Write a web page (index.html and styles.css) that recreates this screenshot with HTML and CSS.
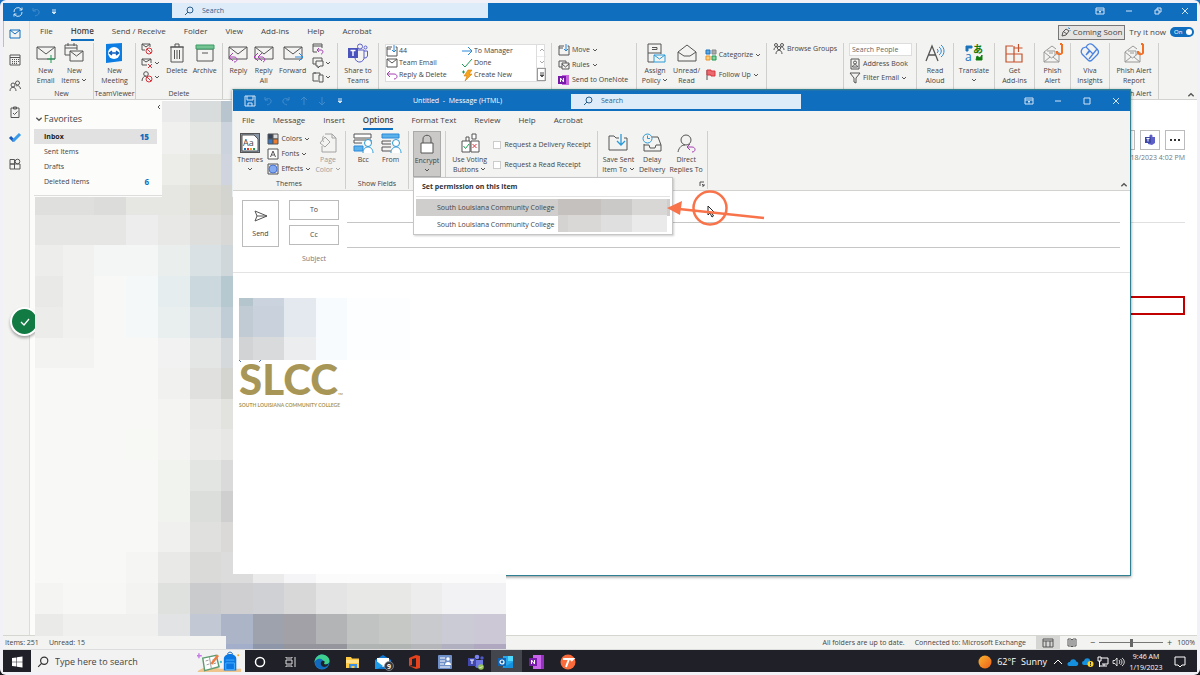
FILE: index.html
```html
<!DOCTYPE html>
<html lang="en">
<head>
<meta charset="utf-8">
<title>Untitled - Message (HTML)</title>
<link rel="stylesheet" href="styles.css">
</head>
<body>
<svg class="sprite" aria-hidden="true">
  <symbol id="env" viewBox="0 0 20 20"><path d="M1 4h18v12H1zM1 4l9 7 9-7"/></symbol>
  <symbol id="chev" viewBox="0 0 6 6"><path d="M1 2l2 2 2-2"/></symbol>
  <symbol id="search" viewBox="0 0 10 10"><circle cx="6" cy="4" r="3"/><path d="M4 6L1 9"/></symbol>
  <symbol id="teams" viewBox="0 0 20 20"><g stroke="#5b5fc7"><circle cx="12" cy="3.500" r="2.500"/><circle cx="17.500" cy="4.500" r="1.500"/><path d="M9 7h7v7a4.500 4.500 0 0 1-9 1M16 8h3.500v5a3 3 0 0 1-3.500 2"/></g><rect x="0" y="5" width="10" height="10" fill="#4b53bc" stroke="none"/><path d="M2.500 7.500h5M5 7.500v5.500" stroke="#fff" stroke-width="1.400"/></symbol>
  <symbol id="ribbonopt" viewBox="0 0 10 10"><path d="M1 2h8v6H1zM1 4h8M5 7.500V5M4 6l1-1 1 1"/></symbol>
  <symbol id="close" viewBox="0 0 10 10"><path d="M2 2l6 6M8 2L2 8"/></symbol>
  <symbol id="min" viewBox="0 0 10 10"><path d="M2 5h6"/></symbol>
  <symbol id="max" viewBox="0 0 10 10"><path d="M2 2h6v6H2z"/></symbol>
  <symbol id="restore" viewBox="0 0 10 10"><path d="M2 4h4v4H2zM4 4V2h4v4H6"/></symbol>
  <symbol id="undo" viewBox="0 0 10 10"><path d="M2 1v3h3M2 4c3-3 7-1 6 2-.5 2-2 2-4 3"/></symbol>
  <symbol id="custom" viewBox="0 0 6 6"><path d="M1 1h4M1 3l2 2 2-2z" fill="currentColor"/></symbol>
  <symbol id="movefolder" viewBox="0 0 12 12"><path d="M6 2H1v9h10V2H9.500M1 4h4"/><path d="M8 0v7M6 5l2 2 2-2" stroke="#2b88d8"/></symbol>
  <symbol id="replyarrow" viewBox="0 0 12 12"><path d="M4 2L1 5l3 3M1 5h7c4 0 4 5 0 5" stroke="#a43fb1"/></symbol>
  <symbol id="phish" viewBox="0 0 20 20"><path d="M1 9l8-6 4 3M1 9v10h15V9M1 9l7.500 6L16 9M1 19l6-5M16 19l-6-5M4 8h8v4M6 10h4" stroke="#999"/><path d="M19 1v9a3 3 0 0 1-5 0V8M17 1h2" stroke="#f36f21" stroke-width="2"/></symbol>
  <symbol id="nosign" viewBox="0 0 12 12"><circle cx="8" cy="8" r="3" stroke="#d9363e"/><path d="M6 6l4 4" stroke="#d9363e"/></symbol>
</svg>

<main class="outlook">
  <header class="titlebar">
    <div class="quick">
      <button aria-label="Sync"><svg class="i10" viewBox="0 0 10 10"><path d="M1 5a4 4 0 0 1 7-3l1 1M9 .500V3H6.500M9 5a4 4 0 0 1-7 3L1 7M1 9.500V7h2.500"/></svg></button>
      <button class="dim" aria-label="Undo"><svg class="i10"><use href="#undo"/></svg></button>
      <button aria-label="Customize"><svg class="i6"><use href="#custom"/></svg></button>
    </div>
    <label class="searchbar"><svg class="i10"><use href="#search"/></svg><input type="text" value="Search" aria-label="Search mail"></label>
    <div class="winctl">
      <button aria-label="Ribbon options"><svg class="i10"><use href="#ribbonopt"/></svg></button>
      <button aria-label="Minimize"><svg class="i10"><use href="#min"/></svg></button>
      <button aria-label="Restore"><svg class="i10"><use href="#restore"/></svg></button>
      <button aria-label="Close"><svg class="i10"><use href="#close"/></svg></button>
    </div>
  </header>

  <div class="workspace">
    <nav class="rail" aria-label="Modules">
      <a href="#" class="on" aria-label="Mail"><svg class="i12" viewBox="0 0 12 12"><path d="M1 2h10v8H1zM1 2l5 4 5-4"/></svg></a>
      <a href="#" aria-label="Calendar"><svg class="i12" viewBox="0 0 12 12"><path d="M1 1h10v10H1zM1 3.500h10"/><path d="M3 5.500h7M3 7.500h7M3 9.300h5" stroke-dasharray="1 1" stroke-width="1.200"/></svg></a>
      <a href="#" aria-label="People"><svg class="i12" viewBox="0 0 12 12"><circle cx="8.500" cy="3" r="2"/><circle cx="4" cy="5" r="2"/><path d="M1 11c0-5 6-5 6 0M7 6c2-1 4 0 4.500 3"/></svg></a>
      <a href="#" aria-label="Tasks"><svg class="i12" viewBox="0 0 12 12"><path d="M2 2h8v9.500H2zM4.500 1h3v2h-3zM4 7l1.500 1.500L8.500 5.500"/></svg></a>
      <a href="#" aria-label="To Do"><svg class="i12" viewBox="0 0 12 12"><path d="M1 5l4 4" stroke="#185abd" stroke-width="3"/><path d="M4 9l7-7" stroke="#3a9be8" stroke-width="3"/></svg></a>
      <a href="#" aria-label="More apps"><svg class="i12" viewBox="0 0 12 12"><path d="M1 1.500h4.500V6H1zM1 6h4.500v5H1zM5.500 6H11v5H5.500z"/><circle cx="8.500" cy="3.500" r="2.300"/></svg></a>
    </nav>

    <div class="main">
      <section class="ribbon">
        <div class="tabrow">
          <nav class="tabs"><a href="#">File</a><a href="#" class="on">Home</a><a href="#">Send / Receive</a><a href="#">Folder</a><a href="#">View</a><a href="#">Add-ins</a><a href="#">Help</a><a href="#">Acrobat</a></nav>
          <div class="preview">
            <button class="coming"><svg class="i10" viewBox="0 0 10 10"><path d="M1 9l1-4 3-3 3 2-3 4zM3 5l3 2"/><path d="M7 1l1 0M9 3v1M9 1l-1 1" stroke="#2b88d8"/></svg>Coming Soon</button>
            <span>Try it now</span><button class="toggle" aria-pressed="true">On</button>
          </div>
        </div>
        <div class="groups main-groups">
          <div class="group"><div class="tools">
            <button class="big"><svg class="i20"><use href="#env"/><path d="M15 12v8M11 16h8" stroke="#1f9a55"/></svg>New<br>Email</button>
            <button class="big"><svg class="i20" viewBox="0 0 20 20"><path d="M6 12H1V2h12v5M1 5h12M4 0v3M10 0v3"/><path d="M6 8h13v10H6zM6 8l6.500 5L19 8"/></svg>New<br>Items <svg class="i6"><use href="#chev"/></svg></button>
          </div><h3>New</h3></div>
          <div class="group"><div class="tools">
            <button class="big"><svg class="i20" viewBox="0 0 20 20"><path d="M2 1l16-1v18L2 20z" fill="#0b7de3" stroke="none"/><circle cx="10" cy="10" r="6" fill="#fff" stroke="none"/><path d="M5.500 10h9M8 8l-2.500 2L8 12M12 8l2.500 2L12 12" stroke="#0b5fc0" stroke-width="1.500"/></svg>New<br>Meeting</button>
          </div><h3>TeamViewer</h3></div>
          <div class="group"><div class="tools">
            <div class="minis">
              <button aria-label="Ignore"><svg class="i12" viewBox="0 0 12 12"><path d="M4 7H1V1h8v3M1 1l4 3 4-3"/><use href="#nosign"/></svg></button>
              <button aria-label="Clean up"><svg class="i12" viewBox="0 0 12 12"><path d="M6 8H1V2h9v4M1 2l4 3 5-3"/><path d="M7 7l4 4M11 7l-4 4" stroke="#d9363e"/></svg><svg class="i6"><use href="#chev"/></svg></button>
              <button aria-label="Junk"><svg class="i12" viewBox="0 0 12 12"><circle cx="5" cy="3" r="2.300"/><path d="M1 10c0-3 2-5 4-5"/><use href="#nosign"/></svg><svg class="i6"><use href="#chev"/></svg></button>
            </div>
            <button class="big"><svg class="i20" viewBox="0 0 20 20"><path d="M4 4h12v15H4zM3 4h14M8 4V1h4v3M7.500 7v9M10 7v9M12.500 7v9"/></svg>Delete</button>
            <button class="big"><svg class="i20" viewBox="0 0 20 20"><path d="M2 6h16v12H2zM7 10h6"/><path d="M1 2h18v4H1z" fill="#74c493" stroke="#3a9b62"/></svg>Archive</button>
          </div><h3>Delete</h3></div>
          <div class="group"><div class="tools">
            <button class="big"><svg class="i20"><use href="#env"/><path d="M5 10l-4 4 4 4M1 14h5c4 0 4 5 0 5" stroke="#a43fb1"/></svg>Reply</button>
            <button class="big"><svg class="i20"><use href="#env"/><path d="M4 10l-4 4 4 4M8 10l-4 4 4 4M4 14h4c3 0 4 4 1 5" stroke="#a43fb1"/></svg>Reply<br>All</button>
            <button class="big"><svg class="i20"><use href="#env"/><path d="M12 14h7M16 10l4 4-4 4" stroke="#2b88d8"/></svg>Forward</button>
            <div class="minis">
              <button aria-label="Meeting"><svg class="i12" viewBox="0 0 12 12"><path d="M5 9H1V1h9v4M1 3h9"/><path d="M7 5L5 7l2 2M5 7h4c3 0 2 4 0 4" stroke="#a43fb1"/></svg></button>
              <button aria-label="IM"><svg class="i12" viewBox="0 0 12 12"><path d="M4 7H1V1h9v3M4 4h7v5H8l-2 2V9H4z"/></svg><svg class="i6"><use href="#chev"/></svg></button>
              <button aria-label="More"><svg class="i12" viewBox="0 0 12 12"><path d="M6 10H1V2h7v2M3 1v2M7 4h4v7H7z"/></svg><svg class="i6"><use href="#chev"/></svg></button>
            </div>
          </div></div>
          <div class="group"><div class="tools"><button class="big"><svg class="i20"><use href="#teams"/></svg>Share to<br>Teams</button></div></div>
          <div class="group"><div class="gallery">
            <button><svg class="i12"><use href="#movefolder"/></svg>44</button><button><svg class="i12" viewBox="0 0 12 12"><path d="M1 6h10M7 2l4 4-4 4" stroke="#2b88d8"/></svg>To Manager</button>
            <button><svg class="i12" viewBox="0 0 12 12"><path d="M1 2h10v8H1zM1 2l5 4 5-4"/></svg>Team Email</button><button><svg class="i12" viewBox="0 0 12 12"><path d="M1 7l3 3 7-8" stroke="#1f9a55"/></svg>Done</button>
            <button><svg class="i12"><use href="#replyarrow"/></svg>Reply &amp; Delete</button><button><svg class="i12" viewBox="0 0 12 12"><path d="M7 1h4L8 5h3L4 12l2-5H3z" fill="#f7a51d" stroke="#d97a00" stroke-width=".6"/><path d="M1 3h3M2.500 1.500v3" stroke="#1f9a55"/></svg>Create New</button>
            <div class="scroller"><button aria-label="Up"><svg class="i6 flip"><use href="#chev"/></svg></button><button aria-label="Down"><svg class="i6"><use href="#chev"/></svg></button><button class="act" aria-label="More steps"><svg class="i6"><use href="#custom"/></svg></button></div>
          </div></div>
          <div class="group"><div class="rows three">
            <button><svg class="i12"><use href="#movefolder"/></svg>Move <svg class="i6"><use href="#chev"/></svg></button>
            <button><svg class="i12" viewBox="0 0 12 12"><path d="M4 8H1V2h7v2M4 4h7v6H4zM4 5l3.500 3L11 5"/></svg>Rules <svg class="i6"><use href="#chev"/></svg></button>
            <button><svg class="i12" viewBox="0 0 12 12"><path d="M4 1h7v10H4z" fill="#c768dd" stroke="none"/><path d="M0 2h8v8H0z" fill="#7719aa" stroke="none"/><path d="M2.500 8V4l3 4V4" stroke="#fff"/></svg>Send to OneNote</button>
          </div></div>
          <div class="group"><div class="tools">
            <button class="big"><svg class="i20" viewBox="0 0 20 20"><path d="M9 19H3V1h13v10M3 10h13M7 4.500h5v2H7"/><path d="M9 12h11v7H9zM9 12l5.500 4 5.500-4" stroke="#2b9ad8"/></svg>Assign<br>Policy <svg class="i6"><use href="#chev"/></svg></button>
            <button class="big"><svg class="i20" viewBox="0 0 20 20"><path d="M1 9l9-7 9 7v9H1zM1 9l6 4h6l6-4"/></svg>Unread/<br>Read</button>
            <div class="rows two">
              <button><svg class="i12" viewBox="0 0 12 12"><path d="M1 1h4v4H1z" fill="#5da7e0" stroke="#1b75bc"/><path d="M7 1h4v4H7z" fill="#aaa" stroke="#888"/><path d="M1 7h4v4H1z" fill="#ffd37a" stroke="#e8912d"/><path d="M7 7h4v4H7z" fill="#8fd0a0" stroke="#1f9a55"/></svg>Categorize <svg class="i6"><use href="#chev"/></svg></button>
              <button><svg class="i12" viewBox="0 0 12 12"><path d="M2 1v10"/><path d="M2 1h4v1h4v5H6V6H2z" fill="#ea6a70" stroke="#d9363e"/></svg>Follow Up <svg class="i6"><use href="#chev"/></svg></button>
            </div>
          </div></div>
          <div class="group"><div class="rows one"><button><svg class="i12" viewBox="0 0 12 12"><circle cx="3" cy="2" r="1.500"/><circle cx="9" cy="2" r="1.500"/><circle cx="6" cy="5" r="1.700"/><path d="M1 7c0-3 3-4 4-2M11 7c0-3-3-4-4-2M3 11c0-5 6-5 6 0"/></svg>Browse Groups</button></div></div>
          <div class="group"><div class="rows find">
            <input type="text" placeholder="Search People" aria-label="Search People">
            <button><svg class="i12" viewBox="0 0 12 12"><path d="M2 1h8v10H2z"/><circle cx="6" cy="4.500" r="1.500"/><path d="M3.500 9c0-3 5-3 5 0z"/></svg>Address Book</button>
            <button><svg class="i12" viewBox="0 0 12 12"><path d="M1 1h10L7 6v5L5 10V6z"/></svg>Filter Email <svg class="i6"><use href="#chev"/></svg></button>
          </div></div>
          <div class="group"><div class="tools"><button class="big"><svg class="i20" viewBox="0 0 20 20"><path d="M1 18L7 3l6 15M3 12h8" stroke-width="1.300"/><path d="M12 6c1.500 1 1.500 3 0 4M14 4c3 2 3 6 0 8M16 2c4 3 4 9 0 12" stroke="#2b88d8"/></svg>Read<br>Aloud</button></div></div>
          <div class="group"><div class="tools"><button class="big"><svg class="i20" viewBox="0 0 20 20"><text x="1" y="18" class="ltr">a</text><text x="9" y="10" class="kana">あ</text><path d="M2 3h6v2H4v3H2z" fill="#1b75bc" stroke="#1b75bc"/><path d="M12 17h6v-5l-2 3-3-2z" fill="#107c10" stroke="#107c10"/></svg>Translate<br><svg class="i6"><use href="#chev"/></svg></button></div></div>
          <div class="group"><div class="tools"><button class="big"><svg class="i20" viewBox="0 0 20 20"><path d="M9 3H2v16h16v-8H2M10 3v16M14.500 1v8M10.500 5h8" stroke="#c5522b" stroke-width="1.200"/></svg>Get<br>Add-ins</button></div></div>
          <div class="group"><div class="tools"><button class="big"><svg class="i20"><use href="#phish"/></svg>Phish<br>Alert</button></div></div>
          <div class="group"><div class="tools"><button class="big"><svg class="i20" viewBox="0 0 20 20"><path d="M10 8L6 4Q9-1 13 2l4 4q3 3 0 6l-5 5q-2 2-4 0L2 11q-2-3 1-6l3-1M10 8l-4 4M10 8l3 3 4-5M6 12l3-4M13 11l-4 5" stroke="#4a84e0" stroke-width="1.300"/></svg>Viva<br>Insights</button></div></div>
          <div class="group"><div class="tools"><button class="big"><svg class="i20"><use href="#phish"/></svg>Phish Alert<br>Report</button></div><h3>Phish Alert</h3></div>
          <button class="collapse" aria-label="Collapse ribbon"><svg class="i8 flip"><use href="#chev"/></svg></button>
        </div>
      </section>

      <div class="content">
        <aside class="folders">
          <button class="hide" aria-label="Collapse folder pane"><svg class="i6" viewBox="0 0 6 6"><path d="M5 1L3 3l2 2"/></svg></button>
          <h2><svg class="i8"><use href="#chev"/></svg>Favorites</h2>
          <a href="#" class="on">Inbox<b>15</b></a>
          <a href="#">Sent Items</a>
          <a href="#">Drafts</a>
          <a href="#">Deleted Items<b>6</b></a>
          <hr>
        </aside>
        <article class="reading">
          <div class="actions"><button aria-label="Forward"></button><button aria-label="Share to Teams"><svg class="i12" viewBox="0 0 12 12"><path d="M4 3h7v6l-3 2-4-1z" fill="#5b5fc7" stroke="none"/><circle cx="7" cy="2" r="1.600" fill="#5b5fc7" stroke="none"/><path d="M1 3h6v6H1z" fill="#4048a8" stroke="none"/><path d="M2.500 4.500h3M4 4.500v3" stroke="#fff"/></svg></button><button aria-label="More actions"><svg class="i12" viewBox="0 0 12 12"><path d="M1 6h2M5 6h2M9 6h2" stroke="#333" stroke-width="2"/></svg></button></div>
          <time>1/18/2023 4:02 PM</time>
          <hr>
          <div class="callout"></div>
        </article>
      </div>
    </div>
  </div>

  <footer class="status">
    <span>Items: 251</span><span>Unread: 15</span>
    <span class="sync">All folders are up to date.</span><span>Connected to: Microsoft Exchange</span>
    <button class="view on" aria-label="Normal view"><svg class="i10" viewBox="0 0 10 10"><path d="M0 1h10v8H0zM0 3h10M3 3v6M7 3v6"/></svg></button>
    <button class="view" aria-label="Reading view"><svg class="i10" viewBox="0 0 10 10"><path d="M1 1h3l1 1 1-1h3v7H6L5 9 4 8H1zM5 2v7M3 2v5M7 2v5"/></svg></button>
    <label class="zoom">−<input type="range" min="0" max="100" value="50" aria-label="Zoom">+</label>
    <span class="pct">100%</span>
  </footer>
</main>

<footer class="taskbar">
  <button class="start" aria-label="Start"><svg class="i12" viewBox="0 0 12 12"><path d="M1 2l4.500-.6v4.300H1zM6 1.300L11.500.500v5.200H6zM1 6.300h4.500v4.300L1 10zM6 6.300h5.500v5.200L6 10.700z" fill="#fff" stroke="none"/></svg></button>
  <label class="tasksearch"><svg class="i12" viewBox="0 0 10 10"><circle cx="6" cy="4" r="3"/><path d="M4 6L1 9"/></svg><input type="text" value="Type here to search" aria-label="Type here to search">
    <svg class="doodle" viewBox="0 0 48 22"><path d="M0 22c3-5 12-7 24-4h22v4z" fill="#f0c58d"/><path d="M6 7l14-3 3 12-15 4z" fill="#fff" stroke="#5d9b72" stroke-width="1.500"/><path d="M13 6l2 12M9 10l3-1M16 9l3-1M10 14l3-1M17 13l3-1" stroke="#999"/><path d="M15 13l7-9" stroke="#ee7d42" stroke-width="2.500"/><path d="M28 8c0-7 13-7 13 0v12H28z" fill="#0b77e3"/><path d="M32 3c0-3 5-3 5 0" stroke="#075cb5"/><path d="M30 12h9v7h-9zM30 9h9" stroke="#49b2ff"/><path d="M2 2v5M0 4.500h5" stroke="#c77be8" stroke-width="1.500"/><circle cx="43" cy="4" r="1" fill="#f0a52b"/><circle cx="25" cy="11" r="1.200" fill="#37c4dc"/></svg></label>
  <div class="apps">
    <button aria-label="Cortana"><svg class="i12" viewBox="0 0 12 12"><circle cx="6" cy="6" r="4.500" stroke="#fff" stroke-width="1.500"/></svg></button>
    <button aria-label="Task view"><svg class="i12" viewBox="0 0 12 12"><path d="M1 1v1h6V1M1 4h6v4H1zM1 11v-1h6v1M10 1v3M10 6v5M9 5h2" stroke="#ddd"/></svg></button>
    <button aria-label="Edge"><svg class="i16" viewBox="0 0 16 16"><circle cx="8" cy="8" r="7.500" fill="#1b7fd0"/><path d="M.500 8C1 3 5 .500 8 .500c5 0 8 4 7.500 7-.5 3-5 4-6 2 2-4-5-6-9-1.500z" fill="#3fcf8e"/><path d="M1 7c4-4 8-2 8 0-4 0-4 6 4 6-3 3-12 3-12-6z" fill="#1169bd"/><path d="M8 7c3-1 3 1 2 3 2 1 4 0 5-1-1 3-3 4-5 4-4-1-4-5-2-6z" fill="#202128"/></svg></button>
    <button aria-label="File Explorer"><svg class="i16" viewBox="0 0 16 16"><path d="M1 3h5l1 1.500h7V14H1z" fill="#ffca45"/><path d="M1 6h13v3H1z" fill="#ffe08a"/><path d="M4 14v-4h8v4H9.500v-2h-3v2z" fill="#3b8ee0"/></svg></button>
    <button aria-label="Mail"><svg class="i20" viewBox="0 0 20 20"><path d="M2 8l8-5 8 5v9H2z" fill="#1279d3"/><path d="M4 6h12v5l-6 4-6-4z" fill="#fff"/><path d="M2 8l8 6-6 3H2z" fill="#1c9be8"/><circle cx="16" cy="14" r="4.500" fill="#333840" stroke="#999" stroke-width=".7"/><text x="14" y="17" class="badge9">9</text></svg></button>
    <button aria-label="Office"><svg class="i16" viewBox="0 0 16 16"><path d="M3 4l7-3 4 1v12l-4 1-7-3 7 1V4L6 5v6l-3 1z" fill="#e6421b"/></svg></button>
    <button aria-label="Directory"><svg class="i16" viewBox="0 0 16 16"><rect x="1" y="1" width="14" height="14" rx="1" fill="#6f8fc8"/><path d="M3 4h5M3 7h5M3 10h4M3 13h10" stroke="#fff"/><circle cx="11" cy="5" r="1.700" fill="#fff"/><path d="M8 11c0-4 6-4 6 0z" fill="#fff"/></svg></button>
    <button aria-label="Teams"><svg class="i16" viewBox="0 0 16 16"><circle cx="9" cy="3" r="2.300" fill="#7b83eb"/><circle cx="14" cy="4" r="1.700" fill="#5059c9"/><path d="M6 6h9v6c-2 3-7 3-8 0z" fill="#6f77e0"/><path d="M0 4h8v8H0z" fill="#4048b0"/><path d="M2 6h4M4 6v4" stroke="#fff"/><circle cx="13" cy="13" r="2.800" fill="#92c353"/><path d="M11.500 13l1 1 2-2" stroke="#fff" stroke-width=".7"/></svg></button>
    <button class="on" aria-label="Outlook"><svg class="i16" viewBox="0 0 16 16"><path d="M5 2h10v12H5z" fill="#28a8ea"/><path d="M10 2h5v5h-5z" fill="#50d9ff"/><path d="M4 14l11-6v6z" fill="#1490df"/><path d="M0 4h8v8H0z" fill="#0f64b5"/><circle cx="4" cy="8" r="2" stroke="#fff" stroke-width="1.200"/></svg></button>
    <button aria-label="OneNote"><svg class="i16" viewBox="0 0 16 16"><path d="M4 1h11v14H4z" fill="#ca64ea"/><path d="M12 1h3v14h-3z" fill="#9332bf"/><path d="M0 4h8v8H0z" fill="#7719aa"/><path d="M2.500 10V6l3 4V6" stroke="#fff"/></svg></button>
    <button aria-label="Recorder"><svg class="i16" viewBox="0 0 16 16"><circle cx="8" cy="8" r="7.500" fill="#fa6b3c"/><path d="M3 5h10l-2 2M9 5l-3 8" stroke="#fff" stroke-width="2"/></svg></button>
  </div>
  <div class="tray">
    <button class="weather"><svg class="i14" viewBox="0 0 14 14"><defs><linearGradient id="sun" x2="1" y2="1"><stop stop-color="#f9b52e"/><stop offset="1" stop-color="#ee5f1b"/></linearGradient></defs><circle cx="7" cy="7" r="6.500" fill="url(#sun)"/></svg><span>62°F</span><span>Sunny</span></button>
    <div class="trayicons">
      <svg class="i12 flip" viewBox="0 0 12 12"><path d="M2 4l4 4 4-4" stroke="#fff"/></svg>
      <svg class="i12" viewBox="0 0 12 12"><path d="M2 10a2 2 0 0 1 1-4c1-4 6-3 6-.5 3 0 3 4.500 0 4.500z" fill="#1490df"/></svg>
      <svg class="i12" viewBox="0 0 12 12"><path d="M2 9a2 2 0 0 1 0-4c1-4 6-3 6-.5v4.500z" fill="#1490df"/><circle cx="8.500" cy="8" r="3" fill="#ffd21f"/><path d="M8.500 6v2.500M8.500 9v1" stroke="#333"/></svg>
      <svg class="i12" viewBox="0 0 12 12"><path d="M4 2h7v6H5M3 10h7M7 8v2M1 1h3v4H1zM2.500 5v6" stroke="#fff"/></svg>
      <svg class="i12" viewBox="0 0 12 12"><path d="M1 4.500h2L5 2v8L3 7.500H1zM7 4c1 1 1 3 0 4M8.500 3c2 2 2 4 0 6M10 2c3 2 3 6 0 8" stroke="#fff" stroke-width=".8"/></svg>
    </div>
    <time class="clock">9:46 AM<br>1/19/2023</time>
    <button class="note" aria-label="Notifications"><svg class="i12" viewBox="0 0 12 12"><path d="M1 1h10v8H8l-2 2-2-2H1z" stroke="#fff"/></svg></button>
  </div>
</footer>

<section class="message" aria-label="Untitled message">
  <header class="msgtitle">
    <div class="quick">
      <button aria-label="Save"><svg class="i12" viewBox="0 0 12 12"><path d="M1 1h10v10H1zM3 1v4h6V1M4 11V8h4v3"/></svg></button>
      <button class="dim" aria-label="Undo"><svg class="i10"><use href="#undo"/></svg></button>
      <button class="dim" aria-label="Redo"><svg class="i10 mirror"><use href="#undo"/></svg></button>
      <button class="dim" aria-label="Previous"><svg class="i10" viewBox="0 0 10 10"><path d="M5 9V1M2 4l3-3 3 3"/></svg></button>
      <button class="dim" aria-label="Next"><svg class="i10" viewBox="0 0 10 10"><path d="M5 1v8M2 6l3 3 3-3"/></svg></button>
      <button aria-label="Customize"><svg class="i6"><use href="#custom"/></svg></button>
    </div>
    <h1>Untitled &nbsp;- &nbsp;Message (HTML)</h1>
    <label class="searchbar"><svg class="i10"><use href="#search"/></svg><input type="text" value="Search" aria-label="Search"></label>
    <div class="winctl">
      <button aria-label="Ribbon options"><svg class="i10"><use href="#ribbonopt"/></svg></button>
      <button aria-label="Minimize"><svg class="i10"><use href="#min"/></svg></button>
      <button aria-label="Maximize"><svg class="i10"><use href="#max"/></svg></button>
      <button aria-label="Close"><svg class="i10"><use href="#close"/></svg></button>
    </div>
  </header>
  <div class="ribbon">
    <nav class="tabs"><a href="#">File</a><a href="#">Message</a><a href="#">Insert</a><a href="#" class="on">Options</a><a href="#">Format Text</a><a href="#">Review</a><a href="#">Help</a><a href="#">Acrobat</a></nav>
    <div class="groups msg-groups">
      <div class="group"><div class="tools">
        <button class="big"><svg class="i20" viewBox="0 0 20 20"><rect x=".500" y=".500" width="19" height="19" fill="#8797a8"/><path d="M2 2h12l4 4v12H2z" fill="#fff" stroke="#555"/><text x="3" y="13" class="aa">Aa</text><path d="M4 16h2" stroke="#1b75bc" stroke-width="2"/><path d="M7 16h2" stroke="#d9363e" stroke-width="2"/><path d="M10 16h2" stroke="#f0a52b" stroke-width="2"/><path d="M13 16h2" stroke="#1f9a55" stroke-width="2"/></svg>Themes<br><svg class="i6"><use href="#chev"/></svg></button>
        <div class="rows three">
          <button><svg class="i12" viewBox="0 0 12 12"><path d="M1 1h5v5H1z" fill="#33425e"/><path d="M6 1h5v5H6z" fill="#ddd"/><path d="M1 6h5v5H1z" fill="#3777c8"/><path d="M6 6h5v5H6z" fill="#ed7d31"/></svg>Colors <svg class="i6"><use href="#chev"/></svg></button>
          <button><svg class="i12" viewBox="0 0 12 12"><path d="M1 1h10v10H1z" fill="#fff"/><path d="M3.500 9L6 3l2.500 6M4.500 7h3"/></svg>Fonts <svg class="i6"><use href="#chev"/></svg></button>
          <button><svg class="i12" viewBox="0 0 12 12"><path d="M1 1h10v10H1z" fill="#e6e6e6"/><circle cx="6" cy="6" r="4" fill="#85a9ee" stroke="#4b74d1"/></svg>Effects <svg class="i6"><use href="#chev"/></svg></button>
        </div>
        <button class="big off" disabled><svg class="i20" viewBox="0 0 20 20"><path d="M7 1h7l4 4v14H4v-6M14 1v4h4M2 10l5-6 5 5-5 5zM6 3c-2 0-2 5 0 6"/></svg>Page<br>Color <svg class="i6"><use href="#chev"/></svg></button>
      </div><h3>Themes</h3></div>
      <div class="group"><div class="tools">
        <button class="big"><svg class="i20" viewBox="0 0 20 20"><path d="M1 1h17v4H1zM1 7h17v3M1 7v3h8" fill="#fff"/><path d="M1 13h9v5H1z" fill="#5bb2ea" stroke="#2b88d8"/><circle cx="15" cy="10" r="3.500" fill="#fff" stroke="#2b9ad8"/><path d="M10 20c0-8 10-8 10 0" stroke="#2b9ad8" fill="#fff"/></svg>Bcc</button>
        <button class="big"><svg class="i20" viewBox="0 0 20 20"><path d="M1 1h17v4H1z" fill="#5bb2ea" stroke="#2b88d8"/><path d="M1 8h9M1 8v3h9M1 14h9M1 14v4h9" /><circle cx="15" cy="10" r="3.500" fill="#fff" stroke="#2b9ad8"/><path d="M10 20c0-8 10-8 10 0" stroke="#2b9ad8" fill="#fff"/></svg>From</button>
      </div><h3>Show Fields</h3></div>
      <div class="group enc"><button class="big encrypt"><svg class="i20" viewBox="0 0 20 20"><path d="M4 9h12v10H4z" fill="#fff"/><path d="M6 9V5c0-5 8-5 8 0v4"/></svg>Encrypt<br><svg class="i6"><use href="#chev"/></svg></button></div>
      <div class="group"><div class="tools">
        <button class="big"><svg class="i20" viewBox="0 0 20 20"><path d="M2 8h8v11H2zM11 8h8v11h-8zM6 8V4h3v4M12 6V1h4v5z" fill="#fff"/><path d="M3.500 13l2 2.500L9 11" stroke="#1f9a55"/><path d="M12.500 11l4 4M16.500 11l-4 4" stroke="#d9363e"/></svg>Use Voting<br>Buttons <svg class="i6"><use href="#chev"/></svg></button>
        <div class="rows checks">
          <label><input type="checkbox">Request a Delivery Receipt</label>
          <label><input type="checkbox">Request a Read Receipt</label>
        </div>
      </div></div>
      <div class="group"><div class="tools">
        <button class="big"><svg class="i20" viewBox="0 0 20 20"><path d="M11 5H8L6 3H1v14h18V5h-3"/><path d="M13 1v11M9 8l4 4 4-4" stroke="#2b9ad8" stroke-width="1.300"/></svg>Save Sent<br>Item To <svg class="i6"><use href="#chev"/></svg></button>
        <button class="big"><svg class="i20" viewBox="0 0 20 20"><path d="M10 4h6l3 8v6H2v-7M2 12h5l1 3h5l1-3h5"/><circle cx="5.500" cy="5.500" r="4.500" stroke="#2b9ad8"/><path d="M5.500 2.500v3H8" stroke="#2b9ad8"/></svg>Delay<br>Delivery</button>
        <button class="big"><svg class="i20" viewBox="0 0 20 20"><circle cx="10" cy="7" r="5"/><path d="M2 19c1-5 4-7 7-7"/><path d="M14 11l-3 3 3 3M11 14h5c4 0 4 5 0 5" stroke="#a43fb1"/></svg>Direct<br>Replies To</button>
      </div><button class="launcher" aria-label="More options"><svg class="i6" viewBox="0 0 6 6"><path d="M1 5V1h4M3 3l2 2M5 3v2H3"/></svg></button></div>
      <button class="collapse" aria-label="Collapse ribbon"><svg class="i8 flip"><use href="#chev"/></svg></button>
    </div>
  </div>
  <form class="compose">
    <button type="button" class="send"><svg class="i14" viewBox="0 0 14 14"><path d="M1 2l12 5-12 5 2-5zM3 7h10"/></svg>Send</button>
    <button type="button">To</button><input type="text" aria-label="To">
    <button type="button">Cc</button><input type="text" aria-label="Cc">
    <label for="subject">Subject</label><input type="text" id="subject">
  </form>
  <div class="letter">
    <svg class="redacted" viewBox="0 0 171 62"><path fill="#b4c5cd" d="M0 0h14v8H0z"/><path fill="#cad3de" d="M14 0h31v8H14z"/><path fill="#c0cbd4" d="M0 8h14v31H0z"/><path fill="#c9d1dd" d="M14 8h31v31H14z"/><path fill="#d1d3d5" d="M0 39h14v23H0z"/><path fill="#d8dadb" d="M14 39h31v23H14z"/><path fill="#e4e9ef" d="M45 0h32v39H45z"/><path fill="#ebedef" d="M45 39h32v23H45z"/><path fill="#f8fbfd" d="M77 0h31v62H77z"/><path fill="#fcfeff" d="M108 0h63v62h-63z"/><path d="M0 62l2 2M22 62l-2 2" stroke="#4a6fc0"/></svg>
    <div class="logo"><b>SLCC</b><i>™</i><small>SOUTH LOUISIANA COMMUNITY COLLEGE</small></div>
  </div>
  <div class="menu" role="menu">
    <strong>Set permission on this item</strong>
    <button role="menuitem" class="on">South Louisiana Community College</button>
    <button role="menuitem">South Louisiana Community College</button>
    <svg class="mask" viewBox="0 0 109 33"><path fill="#c5c1bf" d="M0 0h43v16H0z"/><path fill="#cbc9c7" d="M43 0h31v16H43z"/><path fill="#d8d7d6" d="M74 0h35v16H74z"/><path fill="#d5d3d2" d="M0 16h10v17H0z"/><path fill="#dad8d7" d="M10 16h33v17H10z"/><path fill="#e0dfdf" d="M43 16h31v17H43z"/><path fill="#eaeaea" d="M74 16h35v17H74z"/></svg>
  </div>
</section>

<button class="bubble" aria-label="Completed"><svg class="i12" viewBox="0 0 12 12"><path d="M2 6l3 3 5-6" stroke="#fff" stroke-width="1.300"/></svg></button>

<svg class="mosaic" viewBox="35 101 471 548" aria-hidden="true">
  <path fill="#f8f8f7" d="M35 197h198v386H35z"/>
  <path fill="#e9eae9" d="M162 101h28v21h-28z"/><path fill="#d9dcdd" d="M190 101h31v21h-31z"/><path fill="#b8c5cf" d="M221 101h11v21h-11z"/>
  <path fill="#f0f1ef" d="M162 122h28v32h-28z"/><path fill="#e4e6e4" d="M190 122h31v32h-31z"/><path fill="#ccd3dd" d="M221 122h11v32h-11z"/>
  <path fill="#ecece8" d="M162 154h28v31h-28z"/><path fill="#dfdfda" d="M190 154h31v31h-31z"/><path fill="#cfd4de" d="M221 154h11v31h-11z"/>
  <path fill="#e6e6e2" d="M162 185h28v30h-64v-18h36z"/><path fill="#d9d8d1" d="M190 185h31v30h-31z"/><path fill="#d3d3cf" d="M221 185h11v12h1v18h-12z"/>
  <path fill="#dfdfdd" d="M35 197h59v18H35z"/><path fill="#dcdcdb" d="M94 197h32v18H94z"/>
  <path fill="#e6e6e5" d="M35 215h91v30H35z"/><path fill="#ecedec" d="M126 215h32v30h-32z"/><path fill="#e8e8e6" d="M158 215h32v30h-32z"/><path fill="#dededd" d="M190 215h31v30h-31z"/><path fill="#d8d8d7" d="M221 215h12v30h-12z"/>
  <path fill="#ededec" d="M35 245h28v31H35z"/><path fill="#f1f1f0" d="M63 245h31v93H63z"/><path fill="#f4f6f5" d="M94 245h64v31H94z"/><path fill="#eaeeed" d="M158 245h32v31h-32z"/><path fill="#d9e1e4" d="M190 245h31v31h-31z"/><path fill="#cfd7da" d="M221 245h12v31h-12z"/>
  <path fill="#e9e9e8" d="M35 276h28v31H35z"/><path fill="#f5f8f8" d="M126 276h32v62h-32z"/><path fill="#e6edee" d="M158 276h32v31h-32z"/><path fill="#cbd8de" d="M190 276h31v31h-31z"/><path fill="#b6c8d0" d="M221 276h12v31h-12z"/>
  <path fill="#ececeb" d="M35 307h28v31H35z"/><path fill="#e9eeef" d="M158 307h32v31h-32z"/><path fill="#d7dfe2" d="M190 307h31v31h-31z"/><path fill="#c0ccd6" d="M221 307h12v31h-12z"/>
  <path fill="#f3f3f1" d="M35 338h59v30H35z"/><path fill="#f2f2f2" d="M158 338h32v30h-32z"/><path fill="#e4e5e5" d="M190 338h31v30h-31z"/><path fill="#d5d9dc" d="M221 338h12v30h-12z"/>
  <path fill="#f1f1f0" d="M158 368h32v31h-32z"/><path fill="#e0e0df" d="M190 368h31v31h-31z"/><path fill="#d4d4d0" d="M221 368h12v31h-12z"/>
  <path fill="#f4f4f3" d="M158 399h32v61h-32z"/><path fill="#e9e9e8" d="M190 399h31v30h-31z"/><path fill="#e2e3de" d="M221 399h12v30h-12z"/>
  <path fill="#f7f9f4" d="M126 429h32v31h-32z"/><path fill="#ebebea" d="M190 429h31v31h-31z"/><path fill="#e7e7e5" d="M221 429h12v31h-12z"/>
  <path fill="#f1f3ee" d="M158 460h32v62h-32z"/><path fill="#e2e5e2" d="M190 460h31v31h-31z"/><path fill="#dadadb" d="M221 460h12v31h-12z"/>
  <path fill="#dbdedb" d="M190 491h31v31h-31z"/><path fill="#cfcfcf" d="M221 491h12v31h-12z"/>
  <path fill="#f0f0ef" d="M158 522h32v30h-32z"/><path fill="#e0e0df" d="M190 522h31v30h-31z"/><path fill="#dbd9d7" d="M221 522h12v30h-12z"/>
  <path fill="#f5f5f4" d="M126 552h32v31h-32z"/><path fill="#e9e9e8" d="M158 552h32v31h-32z"/><path fill="#dadad9" d="M190 552h31v31h-31z"/><path fill="#dcdcdc" d="M221 552h12v22h20v9h-32z"/><path fill="#ebebeb" d="M253 574h31v9h-31z"/><path fill="#f5f5f7" d="M284 574h32v9h-32z"/><path fill="#fbfbfb" d="M316 574h190v9H316z"/>
  <path fill="#f4f4f3" d="M35 583h28v31H35z"/><path fill="#f7f7f6" d="M63 583h63v31H63z"/><path fill="#f3f3f2" d="M126 583h32v31h-32z"/><path fill="#dfe1de" d="M158 583h32v31h-32z"/><path fill="#cacbcd" d="M190 583h31v31h-31z"/><path fill="#cfcfd1" d="M221 583h32v31h-32z"/><path fill="#d0d1d4" d="M253 583h31v31h-31z"/><path fill="#d8d8d8" d="M284 583h32v31h-32z"/><path fill="#e4e4e5" d="M316 583h31v31h-31z"/><path fill="#e8e8e7" d="M347 583h64v31h-64z"/><path fill="#ededed" d="M411 583h31v31h-31z"/><path fill="#f2f2f4" d="M442 583h64v31h-64z"/>
  <path fill="#eaeae9" d="M35 614h28v22H35z"/><path fill="#f0f0ee" d="M63 614h95v22H63z"/><path fill="#e1e3e5" d="M158 614h32v22h-32z"/><path fill="#c2c9d5" d="M190 614h31v22h-31z"/><path fill="#acb5c7" d="M221 614h32v30h-27v-8h-5z"/><path fill="#9ea2ad" d="M253 614h31v30h-31z"/><path fill="#a1a1a7" d="M284 614h32v30h-32z"/><path fill="#b3b4b6" d="M316 614h31v30h-31z"/><path fill="#c1c3c2" d="M347 614h32v30h-32z"/><path fill="#c6c8c6" d="M379 614h32v30h-32z"/><path fill="#c9cacd" d="M411 614h31v30h-31z"/><path fill="#cbcbd6" d="M442 614h32v30h-32z"/><path fill="#cdc8d6" d="M474 614h32v30h-32z"/>
  <path fill="#a3afca" d="M226 644h27v5h-27z"/><path fill="#8e97a9" d="M253 644h31v5h-31z"/><path fill="#95959d" d="M284 644h63v5h-63z"/><path fill="#b0b5b4" d="M347 644h64v5h-64z"/><path fill="#b5b6ba" d="M411 644h31v5h-31z"/><path fill="#b1b0c0" d="M442 644h32v5h-32z"/><path fill="#b0a8c1" d="M474 644h32v5h-32z"/>
</svg>

<svg class="pointer" viewBox="0 0 100 40" aria-hidden="true"><circle cx="43" cy="20" r="16.500" stroke="#f9734a" stroke-width="2.500"/><path d="M41 18v9l2-2 2 4 1.500-1-2-3.500h3z" fill="#fff" stroke="#222"/><path d="M12 21l85 9" stroke="#f9734a" stroke-width="2.500"/><path d="M0 20l15-7-2 14z" fill="#f9734a"/></svg>
</body>
</html>
```
FILE: styles.css
```css
* { box-sizing: border-box; }
html { height: 100%; background: linear-gradient(#1a6fc0 50%, #16171b 50%); }
body {
  margin: 0;
  min-height: 100%;
  height: 100vh;
  padding: 3px;
  display: flex;
  flex-direction: column;
  position: relative;
  overflow: hidden;
  background: #f2f1f7;
  border-radius: 6px;
  color: #444;
  font: 7px/10px "Open Sans", "Noto Sans", sans-serif;
}
button, input { font: inherit; color: inherit; margin: 0; padding: 0; border: 0; background: none; border-radius: 0; min-width: 0; }
button { white-space: nowrap; }
a { color: inherit; text-decoration: none; }
h1, h2, h3 { margin: 0; font: inherit; }
svg { fill: none; stroke: #555; flex: none; overflow: visible; }
.sprite { position: absolute; width: 0; height: 0; }
.i6 { width: 6px; height: 6px; }
.i8 { width: 8px; height: 8px; }
.i10 { width: 10px; height: 10px; }
.i12 { width: 12px; height: 12px; }
.i14 { width: 14px; height: 14px; }
.i16 { width: 16px; height: 16px; }
.i20 { width: 20px; height: 20px; }
.flip { transform: rotate(180deg); }
.mirror { transform: scaleX(-1); }
.ltr { font: 12px "Open Sans", sans-serif; fill: #1b75bc; stroke: none; }
.kana { font: bold 10px "Noto Sans CJK JP", sans-serif; fill: #107c10; stroke: none; }
.aa { font: 9px "Open Sans", sans-serif; fill: #444; stroke: none; }
.badge9 { font: bold 7px "Open Sans", sans-serif; fill: #fff; stroke: none; }

/* Main window */
.outlook { flex: 1; display: flex; flex-direction: column; min-height: 0; background: #fff; }
.titlebar, .msgtitle { display: flex; background: #106ebe; color: #fff; }
.titlebar { height: 18px; }
.titlebar svg, .msgtitle svg { stroke: #cfe3f5; color: #cfe3f5; }
.quick { display: flex; align-items: center; }
.quick button { display: grid; place-items: center; width: 18px; }
.dim { opacity: .25; }
.titlebar .quick { flex: 0 1 169px; padding-left: 6px; }
.searchbar { display: flex; align-items: center; gap: 8px; padding-left: 12px; background: #deecf9; color: #2b5f8c; }
.titlebar .searchbar svg, .msgtitle .searchbar svg { stroke: #2b5f8c; }
.titlebar .searchbar { flex: 0 1 316px; height: 15px; }
.winctl { display: flex; margin-left: auto; }
.winctl button { display: grid; place-items: center; width: 29px; }
.titlebar .winctl { height: 15px; }
.titlebar .winctl button:last-child { width: 25px; }

.workspace { flex: 1; display: flex; min-height: 0; }
.rail { flex: 0 0 27px; display: flex; flex-direction: column; background: #f3f3f2; border-right: 1px solid #dcdcdc; }
.rail a { height: 26px; display: grid; place-items: center; padding-right: 4px; border-left: 1px solid transparent; }
.rail .on { border-color: #9cc8ee; }
.rail .on svg { stroke: #106ebe; }
.main { flex: 1; display: flex; flex-direction: column; min-width: 0; }

.ribbon { background: #f3f3f2; border-bottom: 1px solid #d2d2d0; }
.main > .ribbon { height: 79px; }
.tabrow { display: flex; justify-content: space-between; align-items: center; padding-top: 2px; }
.tabs { display: flex; font-size: 8px; line-height: 16px; gap: 18px; padding-left: 10px; }
.tabs a { border-bottom: 2px solid transparent; white-space: nowrap; }
.tabs .on { font-weight: 600; border-color: #106ebe; }
.preview { display: flex; align-items: center; gap: 4px; padding-right: 3px; font-size: 8px; }
.coming { display: flex; align-items: center; gap: 2px; height: 15px; padding: 0 2px; border: 1px solid #777; background: #e6e4e3; }
.toggle { width: 24px; height: 10px; border-radius: 5px; background: #106ebe; color: #fff; font-size: 6px; line-height: 10px; text-align: left; padding-left: 4px; display: flex; justify-content: space-between; align-items: center; }
.toggle::after { content: ""; width: 6px; height: 6px; margin-right: 2px; border-radius: 50%; background: #fff; }

.groups { display: grid; position: relative; }
.group { display: flex; flex-direction: column; justify-content: space-between; border-right: 1px solid #cfcfcd; min-width: 0; }
.group h3 { text-align: center; line-height: 10px; white-space: nowrap; }
.main-groups { height: 56px; margin-top: 2px; grid-template-columns: 64px 42px 87px 115px 41px 173px 85px 130px 77px 73px 37px 41px 40px 36px 39px 49px 1fr; }
.tools { display: flex; justify-content: space-evenly; align-items: flex-start; }
.big { display: block; text-align: center; line-height: 10px; }
.big > .i20 { display: block; margin: 0 auto 2px; }
.main-groups .big > .i20 { margin-bottom: 3px; }
.minis { display: flex; flex-direction: column; gap: 2px; width: 20px; }
.minis button { display: flex; align-items: center; height: 12px; gap: 1px; }
.rows { display: flex; flex-direction: column; }
.rows button { display: flex; align-items: center; gap: 2px; height: 12px; }
.main-groups .three { gap: 3px; padding: 1px 0 0 6px; }
.two { gap: 8px; padding-top: 6px; }
.one { padding-left: 6px; }
.find { gap: 2px; padding: 0 4px 0 5px; }
.find input { background: #fff; border: 1px solid #ddd; height: 13px; padding-left: 2px; width: 100%; }
.find input::placeholder { color: #666; }
.gallery { display: grid; grid-template-columns: 75px 75px 10px; grid-template-rows: repeat(3, 12px); margin: 1px 6px 0; background: #fff; border: 1px solid #ddd; }
.gallery > button { display: flex; align-items: center; gap: 1px; }
.scroller { grid-column: 3; grid-row: 1 / 4; display: grid; border-left: 1px solid #ddd; }
.scroller button { display: grid; place-items: center; border-bottom: 1px solid #ddd; opacity: .5; }
.scroller .act { opacity: 1; border: 1px solid #999; }
.collapse { align-self: end; justify-self: end; display: grid; padding: 0 2px 0 0; }

.content { flex: 1; display: flex; justify-content: space-between; }
.folders { width: 132px; padding: 3px 5px 0 4px; background: #fcfcfb; }
.hide { display: block; height: 7px; margin: 0 -4px 4px auto; }
.hide svg { display: block; }
.folders h2 { display: flex; align-items: center; gap: 1px; font-size: 9px; line-height: 10px; margin-bottom: 5px; padding-left: 1px; }
.folders a { display: flex; justify-content: space-between; line-height: 15px; padding: 0 8px 0 10px; }
.folders .on { background: #e1e1e1; color: #222; font-weight: 700; }
.folders b { color: #106ebe; font-size: 8px; }
.folders hr { margin: 6px -5px 0 0; border: 0; border-top: 1px solid #ddd; }
.reading { width: 140px; padding: 30px 12px 0 0; display: flex; flex-direction: column; }
.actions { display: flex; justify-content: flex-end; gap: 5px; }
.actions button { width: 20px; height: 20px; display: grid; place-items: center; border: 1px solid #bbb; }
.reading time { margin-top: 3px; text-align: right; color: #777; }
.reading hr { width: 100%; margin: 59px 0 0; border: 0; border-top: 1px solid #e0e0e0; }
.callout { margin-top: 73px; height: 19px; border: 2px solid #c00000; }

.status { height: 14px; display: flex; align-items: center; gap: 10px; padding: 0 2px; background: #f3f3f2; border-top: 1px solid #d6d6d0; }
.sync { margin-left: auto; }
.view { display: grid; place-items: center; width: 24px; height: 13px; margin-right: -10px; }
.view.on { background: #d5d5d4; }
.zoom { display: flex; align-items: center; gap: 4px; margin: 0 -5px 0 14px; font-size: 9px; }
.view + .zoom { margin-left: 6px; }
.zoom input { appearance: none; width: 64px; height: 8px; background: linear-gradient(#777, #777) center / 100% 1px no-repeat; }
.zoom input::-webkit-slider-thumb { appearance: none; width: 3px; height: 8px; background: #666; }

/* Taskbar */
.taskbar { height: 23px; display: flex; background: #202128; color: #fff; border-top: 1px solid #ddd; }
.taskbar svg { stroke: none; }
.start { width: 28px; display: grid; place-items: center; padding-top: 2px; }
.tasksearch { flex: 0 1 214px; display: flex; align-items: center; gap: 6px; padding: 2px 2px 0 6px; background: #f2f2f2; color: #444; font-size: 9px; overflow: hidden; }
.taskbar .tasksearch > .i12 { stroke: #333; }
.tasksearch input { flex: 1; }
.doodle { width: 46px; height: 22px; }
.apps { flex: 0 1 338px; display: flex; }
.apps button { flex: 1; display: grid; place-items: center; padding-top: 2px; }
.apps .on { background: #44464d; }
.tray { margin-left: auto; display: flex; align-items: center; padding-top: 2px; }
.weather { display: flex; align-items: center; gap: 5px; font-size: 9px; }
.trayicons { display: flex; gap: 3px; margin: 0 5px; }
.clock { width: 34px; text-align: center; line-height: 11px; }
.note { width: 34px; display: grid; place-items: center; }

/* Message window floating over the mailbox */
.message { position: absolute; left: 232px; right: 69px; top: 89px; bottom: 99px; background: #fff; border: 1px solid #2f8090; border-left-color: #e8eef0; box-shadow: 0 1px 3px #0007; }
.msgtitle { height: 21px; align-items: center; border-top: 1px solid #2372b0; }
.msgtitle .quick { flex: 0 0 180px; padding-left: 8px; }
.msgtitle h1 { flex: 0 0 158px; }
.msgtitle .searchbar { flex: 0 1 230px; height: 15px; }
.message .tabs { padding: 1px 0 0 9px; }
.msg-groups { height: 59px; padding-bottom: 1px; margin-top: 1px; grid-template-columns: 113px 63px 37px 152px 110px 1fr; }
.msg-groups .big { padding-top: 2px; }
.msg-groups .rows button { height: 15px; }
.msg-groups .checks { gap: 9px; padding-top: 8px; }
.checks label { display: flex; align-items: center; gap: 3px; height: 11px; white-space: nowrap; }
.checks input { appearance: none; width: 8px; height: 8px; background: #fff; border: 1px solid #ccc; }
.off { opacity: .5; }
.msg-groups .enc { padding: 0 4px; justify-content: flex-start; }
.encrypt { height: 46px; background: #cbc9c7; border: 1px solid #aaa; }
.launcher { align-self: flex-end; display: grid; padding: 2px; }
.compose { display: grid; grid-template-columns: 37px 50px 1fr; grid-auto-rows: 20px; row-gap: 5px; padding: 9px 10px 2px 9px; border-bottom: 1px solid #e3e3e3; align-items: stretch; text-align: center; }
.compose button { border: 1px solid #bbb; }
.compose button:not(.send), .compose label { grid-column: 2; margin-left: 10px; margin-right: -10px; line-height: 18px; }
.compose input { grid-column: 3; margin-left: 18px; border-bottom: 1px solid #c6c6c4; height: 23px; }
.compose #subject { border: 0; height: 20px; }
.compose label { color: #777; }
.send { grid-row: 1 / 3; height: 47px; display: flex; flex-direction: column; align-items: center; justify-content: center; gap: 6px; }
.letter { padding: 25px 6px; }
.letter .redacted { display: block; width: 171px; height: 62px; stroke: none; }
.logo { display: grid; grid-template-columns: max-content 1fr; color: #a89657; font-family: Lato, "Open Sans", sans-serif; }
.logo b { font-size: 42px; line-height: 38px; font-weight: 900; }
.logo i { align-self: end; font-size: 7px; font-style: normal; line-height: 6px; }
.logo small { grid-column: 1 / 3; margin-top: 3px; font-size: 5px; line-height: 8px; font-weight: 700; }
.menu { position: absolute; left: 180px; top: 87px; width: 260px; height: 58px; padding: 0 2px; background: #fff; border: 1px solid #c6c6c6; box-shadow: 1px 1px 2px #0003; display: flex; flex-direction: column; }
.menu strong { line-height: 18px; padding-left: 6px; border-bottom: 1px solid #e3e3e3; margin-bottom: 2px; color: #333; }
.menu button { height: 17px; padding-left: 21px; text-align: left; }
.menu .on { background: #d0cecc; }
.menu .mask { position: absolute; right: 5px; bottom: 2px; width: 109px; height: 33px; stroke: none; }

/* Overlays */
.mosaic { position: absolute; left: 35px; top: 101px; width: 471px; height: 548px; stroke: none; pointer-events: none; shape-rendering: crispEdges; }
.bubble { position: absolute; left: 10px; top: 307px; width: 29px; height: 29px; border-radius: 50%; background: #127a43; border: 2px solid #fff; box-shadow: 0 2px 3px #0005; display: grid; place-items: center; }
.pointer { position: absolute; left: 667px; top: 188px; width: 100px; height: 40px; stroke: none; }
```
